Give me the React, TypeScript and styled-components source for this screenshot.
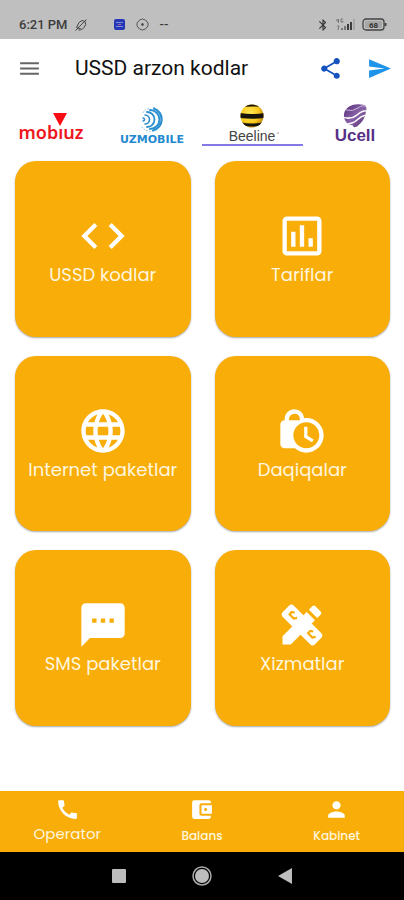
import React from "react";
import styled, { createGlobalStyle } from "styled-components";
import {
  MdMenu,
  MdShare,
  MdSend,
  MdCode,
  MdOutlineAssessment,
  MdLanguage,
  MdLockClock,
  MdSms,
  MdCall,
  MdAccountBalanceWallet,
  MdPerson,
  MdBluetooth,
} from "react-icons/md";

const amber = "#f9ad08";
const rounded = `Poppins, Inter, "Open Sans", sans-serif`;

const GlobalStyle = createGlobalStyle`
  * { box-sizing: border-box; }
  body { margin: 0; background: #fff; font-family: Roboto, sans-serif; }
  button { border: 0; padding: 0; background: none; font: inherit; color: inherit; cursor: pointer; }
`;

const Screen = styled.div`
  display: flex;
  flex-direction: column;
  min-height: 100vh;
`;

const StatusBar = styled.div`
  display: flex;
  justify-content: space-between;
  align-items: center;
  height: 39px;
  padding: 10px 16px 0 19px;
  background: #bfbfbf;
  color: #3c3c3c;
  font-size: 13px;
  font-weight: 500;
`;

const StatusGroup = styled.div<{ $gap: number }>`
  display: flex;
  align-items: center;
  gap: ${(p) => p.$gap}px;
`;

const AppBar = styled.header`
  display: flex;
  align-items: center;
  height: 58px;
  padding: 0 12px 0 17px;
`;

const Title = styled.h1`
  flex: 1;
  margin: 0 0 0 33px;
  font-size: 21px;
  line-height: 28px;
  font-weight: 400;
  color: #111;
`;

const IconButton = styled.button<{ $color: string }>`
  display: flex;
  color: ${(p) => p.$color};
  & + & {
    margin-left: 24px;
  }
`;

const Tabs = styled.nav`
  display: grid;
  grid-template-columns: repeat(4, 1fr);
  grid-auto-rows: 49px;
`;

const Tab = styled.button<{ $active?: boolean }>`
  display: flex;
  justify-content: center;
  align-items: flex-start;
  height: 49px;
  border-bottom: 2px solid ${(p) => (p.$active ? "#8478e6" : "transparent")};
`;

const Cards = styled.main`
  display: grid;
  grid-template-columns: 1fr 1fr;
  gap: 19px 24px;
  padding: 15px 14px 24px 15px;
`;

const Card = styled.button`
  display: flex;
  flex-direction: column;
  align-items: center;
  justify-content: center;
  aspect-ratio: 1;
  padding-top: 1px;
  border-radius: 21px;
  background: ${amber};
  color: #fff;
  box-shadow: 0 1px 2px rgba(0, 0, 0, 0.35);
`;

const CardLabel = styled.span`
  font-family: ${rounded};
  font-size: 18px;
  line-height: 26px;
  color: #fff6df;
`;

const BottomNav = styled.nav`
  display: grid;
  grid-template-columns: repeat(3, 1fr);
  height: 61px;
  margin-top: auto;
  background: ${amber};
  color: #fff;
`;

const NavItem = styled.button<{ $active?: boolean }>`
  display: flex;
  flex-direction: column;
  align-items: center;
  gap: ${(p) => (p.$active ? 2 : 4)}px;
  padding-top: 6px;
`;

const NavLabel = styled.span<{ $active?: boolean }>`
  font-family: ${rounded};
  font-size: ${(p) => (p.$active ? 15 : 12)}px;
  font-weight: ${(p) => (p.$active ? 400 : 500)};
  line-height: 20px;
  color: #fff6df;
`;

const SystemNav = styled.div`
  display: flex;
  justify-content: center;
  align-items: center;
  gap: 66px;
  height: 48px;
  background: #000;
`;

const MutedBell = () => (
  <svg width="14" height="14" viewBox="0 0 14 14" fill="none" stroke="#444" aria-hidden>
    <path d="M2.500 9.500 5 4.500q3-3.500 6-1 2 3-1 6l-2 2zM4.500 12h2M1.500 12.500 12.500 1.500" />
  </svg>
);

const AppBadge = () => (
  <svg width="11" height="11" viewBox="0 0 11 11" aria-hidden>
    <rect width="11" height="11" rx="2" fill="#2637b5" />
    <path d="M2 3.500h7M2 7.500h7" stroke="#7c8fe0" />
    <path d="M4 5.500h3" stroke="#b0609f" />
  </svg>
);

const TargetMark = () => (
  <svg width="13" height="13" viewBox="0 0 13 13" fill="none" stroke="#555" aria-hidden>
    <path d="M6.500 1 9.500 2 12 5v3l-2.500 3-3 1-3-1L1 8V5l2.500-3Z" />
    <circle cx="6.500" cy="6.500" r="1" fill="#444" />
  </svg>
);

const Signal = () => (
  <svg width="20" height="13" viewBox="0 0 20 13" aria-hidden>
    <path d="M1 1 .8 3h2M2.500 1v4M7 1H5v3h2V3M1 8h2l-1 4" fill="none" stroke="#666" strokeWidth=".8" />
    <path d="M5 10h2v2H5zM8 8h2v4H8z" fill="#777" />
    <path d="M11 6h2v6h-2zM14 4h2v8h-2z" fill="#3c3c3c" />
    <path d="M17 1h2v11h-2z" fill="#a7a7a7" />
  </svg>
);

const Battery = () => (
  <svg width="26" height="13" viewBox="0 0 26 13" aria-hidden>
    <rect x="1" y="1" width="21" height="11" rx="3" fill="none" stroke="#444" strokeWidth="1.300" />
    <rect x="3" y="3" width="17" height="7" rx="1" fill="#a6a6a6" />
    <path d="M23.500 5v3" stroke="#444" strokeWidth="2" />
    <text x="11.500" y="9.500" fontSize="8" fontWeight="700" textAnchor="middle" fill="#333">68</text>
  </svg>
);

const MobiuzLogo = () => (
  <svg width="70" height="50" viewBox="0 0 70 50" role="img" aria-label="mobiuz">
    <path d="M37 16h14l-7 13Z" fill="#f80d16" />
    <text x="35" y="42" textAnchor="middle" fontFamily="Noto Sans, sans-serif" fontSize="18" fontWeight="600" fill="#ee1620">mobıuz</text>
  </svg>
);

const UzmobileLogo = () => (
  <svg width="76" height="50" viewBox="0 0 76 50" role="img" aria-label="UZMOBILE">
    <g fill="none" stroke="#2b8fd0" strokeLinecap="round">
      <path d="M40 11.500a11.500 11.500 0 0 1-1 22" strokeWidth="2.200" />
      <path d="M36 13a9.500 9.500 0 0 1 0 19" strokeWidth="2" />
      <path d="M33 15a7.500 7.500 0 0 1 0 15" strokeWidth="1.800" />
      <path d="M31 18a4.500 4.500 0 0 1 0 9" strokeWidth="1.600" />
      <path d="M29 21a1.500 1.500 0 0 1 0 3" strokeWidth="1.500" />
      <path d="M29 15.500q2-3 6-4M28 30q3 4 8 4.500" stroke="#83bfe5" strokeDasharray="1 2" />
    </g>
    <text x="38" y="46" textAnchor="middle" fontFamily="DejaVu Sans, sans-serif" fontSize="11" fontWeight="700" fill="#2589cf">UZMOBILE</text>
  </svg>
);

const BeelineLogo = () => (
  <svg width="60" height="50" viewBox="0 0 60 50" role="img" aria-label="Beeline">
    <defs>
      <clipPath id="ball"><circle cx="29" cy="19" r="11.500" /></clipPath>
      <radialGradient id="sun" cx=".4" cy=".4" r=".65">
        <stop offset="0" stopColor="#ffe95a" />
        <stop offset=".6" stopColor="#fcc91c" />
        <stop offset="1" stopColor="#b97c0b" />
      </radialGradient>
    </defs>
    <g clipPath="url(#ball)">
      <path d="M17 7h24v24H17z" fill="url(#sun)" />
      <path d="M17 7h24v3.500q-12-2-24 0zM17 16q12 2 24 0v5q-12 1.500-24 0zM17 25q12 3 24 0v3q-12 3-24 0z" fill="#17140d" />
    </g>
    <text x="29" y="44" textAnchor="middle" fontFamily="Liberation Sans, sans-serif" fontSize="14" fill="#444">Beeline</text>
    <path d="M54 36h2" stroke="#999" />
  </svg>
);

const UcellLogo = () => (
  <svg width="60" height="50" viewBox="0 0 60 50" role="img" aria-label="Ucell">
    <defs>
      <linearGradient id="violet" x1="0" y1="0" x2="1" y2="1">
        <stop offset="0" stopColor="#49206e" />
        <stop offset=".5" stopColor="#8a63a8" />
        <stop offset="1" stopColor="#45205f" />
      </linearGradient>
      <clipPath id="drop">
        <path d="M20 20C19 11 28 6 37 7.500q7 0 5 7-1 9-9 15-4 2-4-1-8-1-9-8.500Z" />
      </clipPath>
    </defs>
    <g clipPath="url(#drop)">
      <path d="M17 6h27v28H17z" fill="url(#violet)" />
      <path d="M22 13q7 2 12-2t9-1" fill="none" stroke="#cbb8da" strokeWidth="1" />
      <path d="M18 20q9 3 15-2t11-4M21 27q8 0 12-4t9-5" fill="none" stroke="#fff" strokeWidth="1.500" />
    </g>
    <text x="31" y="44" textAnchor="middle" fontFamily="Liberation Sans, sans-serif" fontSize="17" fontWeight="700" fill="#573087">Ucell</text>
  </svg>
);

const PencilRuler = ({ size }: { size: number }) => (
  <svg width={size} height={size} viewBox="0 0 24 24" aria-hidden>
    <rect x="1.500" y="8.400" width="21" height="7.200" rx="1.600" transform="rotate(45 12 12)" fill="#fff" />
    <path
      d="M8.600 6.300 7.200 6 6.300 7.100l1.900 1.900 1.500-.3M17.200 15l-1.400-.3-1 1.100 2 2 1.500-.3"
      fill="none"
      stroke={amber}
      strokeWidth="1"
    />
    <path d="M3 17.200V21h3.800L18 9.800 14.200 6Z" fill="#fff" />
    <path d="m15.200 5 1.500-1.600q.8-.7 1.500 0l2.400 2.400q.7.700 0 1.500L19 8.800Z" fill="#fff" />
  </svg>
);

const cards = [
  { label: "USSD kodlar", Icon: MdCode },
  { label: "Tariflar", Icon: MdOutlineAssessment },
  { label: "Internet paketlar", Icon: MdLanguage },
  { label: "Daqiqalar", Icon: MdLockClock },
  { label: "SMS paketlar", Icon: MdSms },
  { label: "Xizmatlar", Icon: PencilRuler },
];

const navItems = [
  { label: "Operator", Icon: MdCall, active: true },
  { label: "Balans", Icon: MdAccountBalanceWallet },
  { label: "Kabinet", Icon: MdPerson },
];

export default function App() {
  return (
    <Screen>
      <GlobalStyle />
      <StatusBar>
        <StatusGroup $gap={26}>
          <StatusGroup $gap={6}>
            <span>6:21 PM</span>
            <MutedBell />
          </StatusGroup>
          <StatusGroup $gap={11}>
            <AppBadge />
            <TargetMark />
            <span>--</span>
          </StatusGroup>
        </StatusGroup>
        <StatusGroup $gap={6}>
          <MdBluetooth size={14} />
          <Signal />
          <Battery />
        </StatusGroup>
      </StatusBar>
      <AppBar>
        <IconButton $color="#666" aria-label="Menu">
          <MdMenu size={25} />
        </IconButton>
        <Title>USSD arzon kodlar</Title>
        <IconButton $color="#1453bd" aria-label="Share">
          <MdShare size={25} />
        </IconButton>
        <IconButton $color="#1e93ea" aria-label="Send">
          <MdSend size={25} />
        </IconButton>
      </AppBar>
      <Tabs>
        <Tab aria-label="mobiuz"><MobiuzLogo /></Tab>
        <Tab aria-label="UZMOBILE"><UzmobileLogo /></Tab>
        <Tab aria-label="Beeline" $active><BeelineLogo /></Tab>
        <Tab aria-label="Ucell"><UcellLogo /></Tab>
      </Tabs>
      <Cards>
        {cards.map(({ label, Icon }) => (
          <Card key={label}>
            <Icon size={52} />
            <CardLabel>{label}</CardLabel>
          </Card>
        ))}
      </Cards>
      <BottomNav>
        {navItems.map(({ label, Icon, active }) => (
          <NavItem key={label} $active={active}>
            <Icon size={25} />
            <NavLabel $active={active}>{label}</NavLabel>
          </NavItem>
        ))}
      </BottomNav>
      <SystemNav>
        <svg width="14" height="14" viewBox="0 0 14 14" aria-hidden>
          <rect width="14" height="14" rx="1" fill="#bdbdbd" />
        </svg>
        <svg width="20" height="20" viewBox="0 0 20 20" aria-hidden>
          <circle cx="10" cy="10" r="9" fill="none" stroke="#aaa" strokeWidth="1.500" />
          <circle cx="10" cy="10" r="7" fill="#bdbdbd" />
        </svg>
        <svg width="14" height="16" viewBox="0 0 14 16" aria-hidden>
          <path d="M14 0v16L0 8Z" fill="#bdbdbd" />
        </svg>
      </SystemNav>
    </Screen>
  );
}
